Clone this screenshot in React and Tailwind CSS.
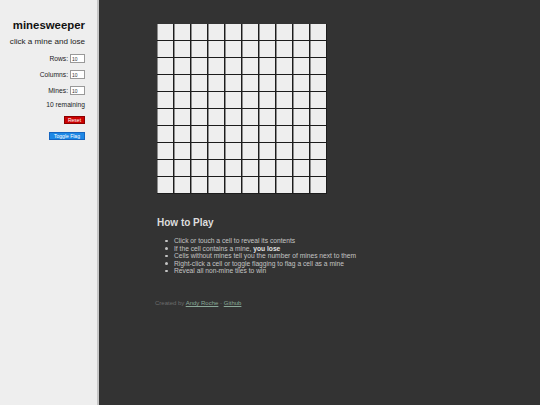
import React from 'react';

const ROWS = 10;
const COLS = 10;

function Field({ label }) {
    return (
        <div className="flex items-center h-[9px] mt-[7px] first:mt-0">
            <span className="text-[6.7px] leading-[8px] text-[#222]">{label}</span>
            <input
                readOnly
                value="10"
                className="ml-[2px] w-[15px] h-[9px] bg-white border border-[#999] px-[1px] text-[5px] leading-[7px] text-[#333] outline-none"
            />
        </div>
    );
}

export default function App() {
    const rules = [
        'Click or touch a cell to reveal its contents',
        null,
        'Cells without mines tell you the number of mines next to them',
        'Right-click a cell or toggle flagging to flag a cell as a mine',
        'Reveal all non-mine tiles to win'
    ];

    return (
        <div className="flex w-[540px] h-[405px] overflow-hidden font-['Liberation_Sans',Arial,sans-serif]">
            {/* sidebar */}
            <div className="w-[99px] shrink-0 bg-[#eeeeee] border-r-2 border-[#c6c6c6] flex flex-col items-end pr-[12px] pt-[19px]">
                <h1 className="text-[11.4px] leading-[13px] font-bold text-[#111]">minesweeper</h1>
                <p className="mt-[5px] text-[8.1px] leading-[9px] text-[#222]">click a mine and lose</p>

                <div className="mt-[8px] flex flex-col items-end">
                    <Field label="Rows:" />
                    <Field label="Columns:" />
                    <Field label="Mines:" />
                </div>

                <p className="mt-[6px] text-[6.7px] leading-[8px] text-[#222]">10 remaining</p>

                <button className="mt-[7px] h-[8px] w-[21px] flex items-center justify-center bg-[#cc0000] border border-[#8a0000] text-white text-[5px] leading-[6px]">
                    Reset
                </button>
                <button className="mt-[8px] h-[8px] w-[36px] flex items-center justify-center bg-[#1e88e5] border border-[#1565c0] text-white text-[5px] leading-[6px]">
                    Toggle Flag
                </button>
            </div>

            {/* board + instructions */}
            <div className="flex-1 bg-[#333333] pl-[58px] pt-[24px]">
                <div className="flex flex-col w-[170px]">
                    {Array.from({ length: ROWS }).map((_, r) => (
                        <div key={r} className="flex">
                            {Array.from({ length: COLS }).map((_, c) => (
                                <div
                                    key={c}
                                    className="w-[17px] h-[17px] bg-[#eeeeee] border-r border-b border-[#1c1c1c] shadow-[inset_1px_0_0_#8c8c8c]"
                                />
                            ))}
                        </div>
                    ))}
                </div>

                <h2 className="mt-[23px] text-[10px] leading-[12px] font-bold text-[#dddddd]">How to Play</h2>
                <ul className="mt-[8px] text-[6.7px] leading-[7.6px] text-[#c4c4c4]">
                    {rules.map((rule, i) => (
                        <li key={i} className="flex items-center">
                            <span className="ml-[8px] mr-[6.5px] w-[2.5px] h-[2.5px] rounded-full bg-[#c4c4c4]" />
                            {rule ?? (
                                <span>
                                    If the cell contains a mine, <b className="font-bold text-[#e0e0e0]">you lose</b>
                                </span>
                            )}
                        </li>
                    ))}
                </ul>

                <p className="mt-[25px] -ml-[2px] text-[6px] leading-[7px] text-[#6c6c6c]">
                    Created by <a href="#" className="underline text-[#8aa898]">Andy Roche</a> - <a href="#" className="underline text-[#8aa898]">Github</a>
                </p>
            </div>
        </div>
    );
}
